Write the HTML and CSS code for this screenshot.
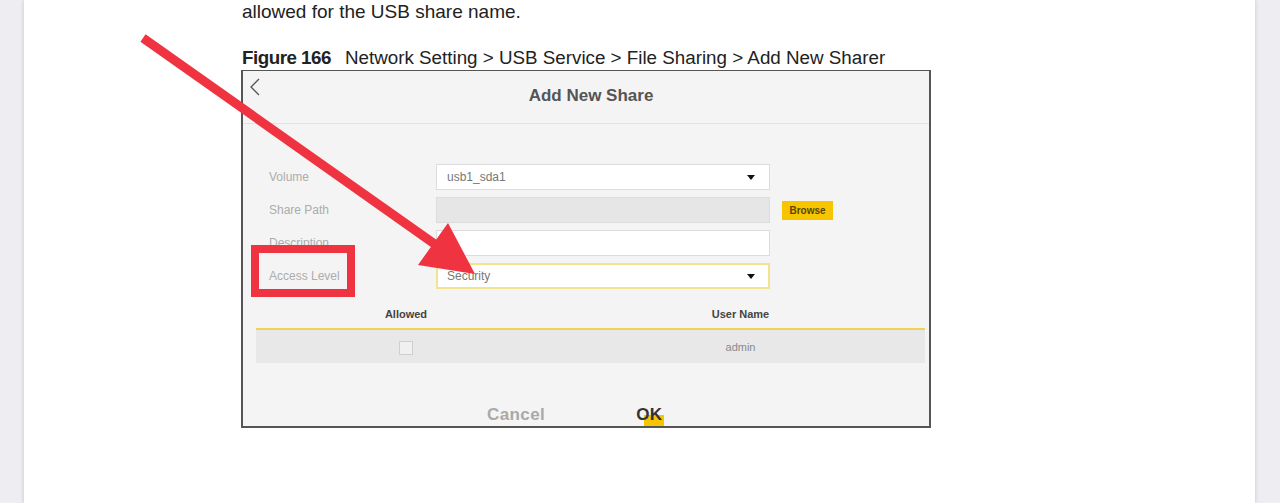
FILE: index.html
```html
<!DOCTYPE html>
<html lang="en">
  <head>
    <meta charset="UTF-8" />
    <title>Add New Share</title>
    <link rel="stylesheet" href="styles.css">
  </head>
  <body>
    <div class="page">
      <p class="intro">allowed for the USB share name.</p>
      <p class="caption"><b>Figure 166</b>Network Setting &gt; USB Service &gt; File Sharing &gt; Add New Sharer</p>

      <div class="dialog">
        <div class="dialog-head">
          <svg class="back" width="12" height="18" viewBox="0 0 12 18">
            <polyline points="10,1 2,9 10,17" fill="none" stroke="#555" stroke-width="1.3" />
          </svg>
          <h2>Add New Share</h2>
        </div>

        <div class="form">
          <div class="row">
            <label>Volume</label>
            <div class="field">usb1_sda1<span class="caret"></span></div>
          </div>
          <div class="row">
            <label>Share Path</label>
            <div class="field disabled"></div>
            <span class="browse">Browse</span>
          </div>
          <div class="row">
            <label>Description</label>
            <div class="field"></div>
          </div>
          <div class="row">
            <label>Access Level</label>
            <div class="field focus">Security<span class="caret"></span></div>
          </div>
        </div>

        <table class="users">
          <thead>
            <tr>
              <th class="col-allowed">Allowed</th>
              <th>User Name</th>
            </tr>
          </thead>
          <tbody>
            <tr>
              <td><span class="check"></span></td>
              <td>admin</td>
            </tr>
          </tbody>
        </table>

        <div class="actions">
          <span class="cancel">Cancel</span>
          <span class="ok">OK</span>
        </div>
      </div>
    </div>

    <!-- annotations drawn on top of the screenshot -->
    <div class="mark-box"></div>
    <svg class="arrow" width="1280" height="503" viewBox="0 0 1280 503">
      <line x1="143" y1="38" x2="436" y2="245" stroke="#ef3340" stroke-width="9" />
      <polygon points="448,223 418,265 475,274" fill="#ef3340" />
    </svg>
  </body>
</html>
```

FILE: styles.css
```css
body {
  margin: 0;
  background: #eeeef2;
  font-family: "Liberation Sans", Arial, sans-serif;
  position: relative;
  height: 503px;
  overflow: hidden;
}
.page {
  margin-left: 24px;
  width: 1231px;
  height: 503px;
  box-sizing: border-box;
  padding-left: 218px;
  background: #fff;
  box-shadow: 0 0 4px rgba(0, 0, 0, 0.18);
}
.intro {
  margin: 0;
  font-size: 19px;
  line-height: 24px;
  color: #222;
}
.caption {
  margin: 22px 0 0;
  font-size: 18.8px;
  line-height: 24px;
  color: #222;
}
.caption b {
  letter-spacing: -0.5px;
  margin-right: 14px;
}

.dialog {
  width: 690px;
  height: 358px;
  margin-left: -1px;
  box-sizing: border-box;
  border: 2px solid #555;
  border-top-width: 1px;
  background: #f4f4f4;
  overflow: hidden;
}
.dialog-head {
  display: flex;
  height: 52px;
  border-bottom: 1px solid #e2e2e2;
}
.back {
  margin: 7px 0 0 6px;
}
.dialog-head h2 {
  flex: 1;
  margin: 15px 0 0;
  padding-right: 8px;
  text-align: center;
  font-size: 17px;
  line-height: 20px;
  color: #555;
}

.form {
  padding: 40px 0 0 26px;
  display: flex;
  flex-direction: column;
  gap: 7px;
}
.row {
  display: flex;
  align-items: center;
  height: 26px;
}
.row label {
  width: 167px;
  font-size: 12px;
  color: #acacac;
}
.field {
  width: 334px;
  height: 26px;
  box-sizing: border-box;
  display: flex;
  align-items: center;
  justify-content: space-between;
  padding: 0 14px 0 10px;
  background: #fff;
  border: 1px solid #dcdcdc;
  font-size: 12px;
  color: #777;
}
.field.disabled {
  background: #e6e6e6;
}
.field.focus {
  border: 2px solid #f4e28f;
  padding-left: 9px;
  padding-right: 13px;
}
.caret {
  width: 0;
  height: 0;
  border-left: 4px solid transparent;
  border-right: 4px solid transparent;
  border-top: 5px solid #111;
}
.browse {
  margin-left: 12px;
  width: 51px;
  height: 19px;
  background: #f6c500;
  font-size: 10px;
  font-weight: bold;
  line-height: 19px;
  text-align: center;
  color: #5a4600;
}

.users {
  margin: 11px 0 0 13px;
  width: 669px;
  border-collapse: collapse;
  font-size: 11px;
}
.users th {
  height: 26px;
  color: #444;
  border-bottom: 2px solid #f1d157;
}
.users .col-allowed {
  width: 298px;
}
.users td {
  height: 33px;
  padding: 0;
  background: #e8e8e8;
  text-align: center;
  color: #8a8a8a;
}
.check {
  display: inline-block;
  width: 12px;
  height: 12px;
  margin-top: 4px;
  border: 1px solid #cfcfcf;
  background: #f0f0f0;
}

.actions {
  display: flex;
  gap: 91px;
  padding: 42px 0 0 244px;
  font-size: 17px;
  font-weight: bold;
  line-height: 20px;
  letter-spacing: 0.4px;
}
.cancel {
  color: #a9a9a9;
}
.ok {
  position: relative;
  z-index: 0;
  color: #333;
}
.ok::before {
  content: "";
  position: absolute;
  left: 8px;
  top: 10px;
  width: 20px;
  height: 20px;
  background: #f6c500;
  z-index: -1;
}

.mark-box {
  position: absolute;
  left: 251px;
  top: 245px;
  width: 104px;
  height: 52px;
  box-sizing: border-box;
  border: 8px solid #ef3340;
}
.arrow {
  position: absolute;
  left: 0;
  top: 0;
}
```
